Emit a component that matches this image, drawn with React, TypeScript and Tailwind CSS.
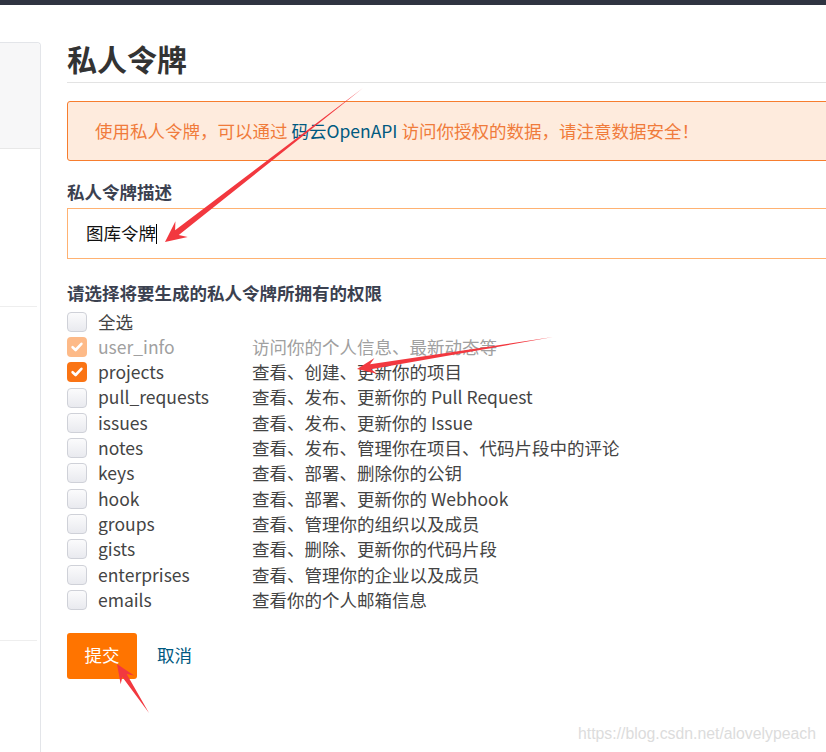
const perms = [
  { name: '全选', desc: '', checked: false, disabled: false },
  { name: 'user_info', desc: '访问你的个人信息、最新动态等', checked: true, disabled: true },
  { name: 'projects', desc: '查看、创建、更新你的项目', checked: true, disabled: false },
  { name: 'pull_requests', desc: '查看、发布、更新你的 Pull Request', checked: false, disabled: false },
  { name: 'issues', desc: '查看、发布、更新你的 Issue', checked: false, disabled: false },
  { name: 'notes', desc: '查看、发布、管理你在项目、代码片段中的评论', checked: false, disabled: false },
  { name: 'keys', desc: '查看、部署、删除你的公钥', checked: false, disabled: false },
  { name: 'hook', desc: '查看、部署、更新你的 Webhook', checked: false, disabled: false },
  { name: 'groups', desc: '查看、管理你的组织以及成员', checked: false, disabled: false },
  { name: 'gists', desc: '查看、删除、更新你的代码片段', checked: false, disabled: false },
  { name: 'enterprises', desc: '查看、管理你的企业以及成员', checked: false, disabled: false },
  { name: 'emails', desc: '查看你的个人邮箱信息', checked: false, disabled: false },
]

type Pt = [number, number]

// annotation arrow: thin tail, swept head
function arrowPoints(t: Pt, p: Pt, len: number, half: number, shaft: number) {
  const dx = p[0] - t[0]
  const dy = p[1] - t[1]
  const d = Math.hypot(dx, dy)
  const ux = dx / d
  const uy = dy / d
  const nx = -uy
  const ny = ux
  const wing: Pt = [p[0] - ux * len, p[1] - uy * len]
  const neck: Pt = [p[0] - ux * len * 0.72, p[1] - uy * len * 0.72]
  const pts: Pt[] = [
    t,
    [neck[0] + nx * shaft, neck[1] + ny * shaft],
    [wing[0] + nx * half, wing[1] + ny * half],
    p,
    [wing[0] - nx * half, wing[1] - ny * half],
    [neck[0] - nx * shaft, neck[1] - ny * shaft],
  ]
  return pts.map((q) => q.join(',')).join(' ')
}

function Check({ checked, disabled }: { checked: boolean; disabled: boolean }) {
  if (!checked) {
    return (
      <span className="w-[20px] h-[20px] rounded-[4px] border border-[#cfd1d8] bg-gradient-to-b from-[#fbfbfc] to-[#e9eaef] shrink-0" />
    )
  }
  return (
    <span
      className={`w-[20px] h-[20px] rounded-[4px] shrink-0 flex items-center justify-center ${
        disabled ? 'bg-[#fdba88]' : 'bg-[#fa7414]'
      }`}
    >
      <svg width="14" height="14" viewBox="0 0 14 14">
        <path d="M2.6 7.2 L5.6 10 L11.4 3.8" fill="none" stroke="#fff" strokeWidth="2.6" strokeLinecap="round" strokeLinejoin="round" />
      </svg>
    </span>
  )
}

export default function App() {
  return (
    <div
      className="relative w-[826px] h-[752px] overflow-hidden bg-white text-[17.5px] text-[#444]"
      style={{ fontFamily: '"Noto Sans CJK SC", "Noto Sans", sans-serif' }}
    >
      <div className="h-[5px] bg-[#2f3441]" />

      <div className="flex">
        {/* sidebar */}
        <div className="mt-[37px] w-[41px] h-[720px] shrink-0 border-t border-r border-[#e3e5e9] rounded-tr-[4px] flex flex-col">
          <div className="h-[106px] bg-[#f7f7f8] border-b border-[#e8e8e8] rounded-tr-[4px]" />
          <div className="h-[158px] border-b border-[#eeeeee] mr-[3px]" />
          <div className="h-[334px] border-b border-[#eeeeee] mr-[3px]" />
        </div>

        {/* main */}
        <div className="ml-[26px] w-[800px] shrink-0 pt-[33px] flex flex-col">
          <h1 className="text-[30px] leading-[40px] font-bold text-[#333] pb-[4px] border-b border-[#e3e3e3]">
            私人令牌
          </h1>

          <div className="mt-[18px] h-[60px] flex items-center pl-[27px] border border-[#f77d2e] bg-[#feebdd] rounded-[3px] text-[#f07b3b]">
            使用私人令牌，可以通过&nbsp;<span className="text-[#005980]">码云OpenAPI</span>&nbsp;访问你授权的数据，请注意数据安全！
          </div>

          <div className="mt-[18px] leading-[25px] font-bold text-[#3b4150]">私人令牌描述</div>
          <div className="mt-[4px] h-[51px] border border-[#ffb272] flex items-center pl-[18px] text-[#111]">
            图库令牌
            <span className="w-px h-[20px] bg-[#000]" />
          </div>

          <div className="mt-[21px] leading-[25px] font-bold text-[#3b4150]">请选择将要生成的私人令牌所拥有的权限</div>
          <div className="mt-[4px] flex flex-col">
            {perms.map((p) => (
              <div key={p.name} className="h-[25.3px] flex items-center">
                <div className="w-[185px] flex items-center gap-[11px]">
                  <Check checked={p.checked} disabled={p.disabled} />
                  <span className={p.disabled ? 'text-[#a0a0a0]' : 'text-[#444]'}>{p.name}</span>
                </div>
                <span className={p.disabled ? 'text-[#a0a0a0]' : 'text-[#444]'}>{p.desc}</span>
              </div>
            ))}
          </div>

          <div className="mt-[20px] flex items-center gap-[20px]">
            <button className="w-[70px] h-[46px] bg-[#ff7400] rounded-[3px] text-white">提交</button>
            <span className="text-[#005980]">取消</span>
          </div>
        </div>
      </div>

      {/* watermark */}
      <div
        className="absolute left-[578px] top-[722px] text-[15.8px] leading-[24px] text-[#dcdcdc]"
        style={{ fontFamily: '"Liberation Sans", Arial, sans-serif' }}
      >
        https://blog.csdn.net/alovelypeach
      </div>

      {/* annotation arrows */}
      <svg className="absolute inset-0 pointer-events-none" width="826" height="752">
        <polygon points={arrowPoints([363, 88], [165, 242], 21, 10, 3)} fill="#f2383f" />
        <polygon points={arrowPoints([553, 337], [357, 369], 19, 8, 2.6)} fill="#f2383f" />
        <polygon points={arrowPoints([149, 713], [117, 664], 19, 8, 2.6)} fill="#f2383f" />
      </svg>
    </div>
  )
}
